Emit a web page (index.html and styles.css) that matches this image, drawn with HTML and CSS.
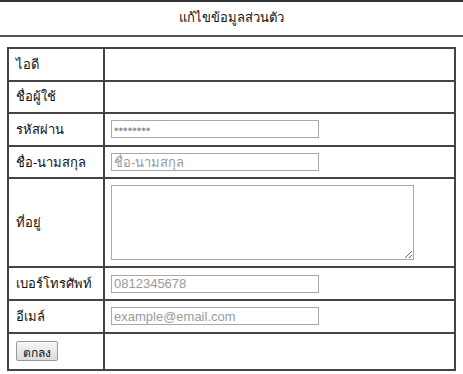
FILE: index.html
```html
<!DOCTYPE html>
<html lang="th">
<head>
  <meta charset="UTF-8" />
  <title>แก้ไขข้อมูลส่วนตัว</title>
  <link rel="stylesheet" href="styles.css">
</head>
<body>
  <!-- Header -->
  <div class="page-title">แก้ไขข้อมูลส่วนตัว</div>
  <!-- Profile form -->
  <form class="profile-form">
    <table class="profile-table">
      <tr>
        <td class="label">ไอดี</td>
        <td></td>
      </tr>
      <tr>
        <td class="label">ชื่อผู้ใช้</td>
        <td></td>
      </tr>
      <tr>
        <td class="label">รหัสผ่าน</td>
        <td><input type="password" class="field" placeholder="••••••••"></td>
      </tr>
      <tr>
        <td class="label">ชื่อ-นามสกุล</td>
        <td><input type="text" class="field" placeholder="ชื่อ-นามสกุล"></td>
      </tr>
      <tr class="tall">
        <td class="label">ที่อยู่</td>
        <td><textarea class="area"></textarea></td>
      </tr>
      <tr>
        <td class="label">เบอร์โทรศัพท์</td>
        <td><input type="text" class="field" placeholder="0812345678"></td>
      </tr>
      <tr>
        <td class="label">อีเมล์</td>
        <td><input type="text" class="field" placeholder="example@email.com"></td>
      </tr>
      <tr class="last">
        <td class="label"><button type="button" class="submit">ตกลง</button></td>
        <td></td>
      </tr>
    </table>
  </form>
</body>
</html>
```

FILE: styles.css
```css
/* Base */
* {
  box-sizing: border-box;
}
body {
  margin: 0;
  font-family: Tahoma, "Noto Sans", "DejaVu Sans", sans-serif;
  font-size: 13px;
  color: #111;
  background: #fff;
}
/* Header */
.page-title {
  height: 37px;
  border-top: 2px solid #333;
  border-bottom: 2px solid #555;
  display: flex;
  align-items: center;
  justify-content: center;
  padding-bottom: 2px;
}
/* Table */
.profile-form {
  padding: 10px 7px 0 7px;
}
.profile-table {
  width: 449px;
  border-collapse: collapse;
  border: 2px solid #333;
}
.profile-table td {
  border: 2px solid #444;
  height: 32.6px;
  padding: 0 6px;
  vertical-align: middle;
}
.profile-table td.label {
  width: 96px;
  padding-left: 7px;
}
.profile-table tr.tall td {
  height: 89px;
}
.profile-table tr.last td {
  height: 37px;
}
.field {
  width: 208px;
  height: 18px;
  border: 1px solid #a9a9a9;
  padding: 0 2px;
  font-family: "Liberation Sans", Arial, sans-serif;
  font-size: 13px;
  display: block;
}
.field::placeholder,
.area::placeholder {
  color: #9a9a9a;
}
.area {
  width: 303px;
  height: 75px;
  border: 1px solid #a9a9a9;
  display: block;
  resize: both;
}
.submit {
  font-family: inherit;
  font-size: 12px;
  padding: 1px 6px;
  height: 20px;
  border: 1px solid #9a9a9a;
  border-radius: 2px;
  background: linear-gradient(#f6f6f6, #dcdcdc);
  color: #111;
}
```
